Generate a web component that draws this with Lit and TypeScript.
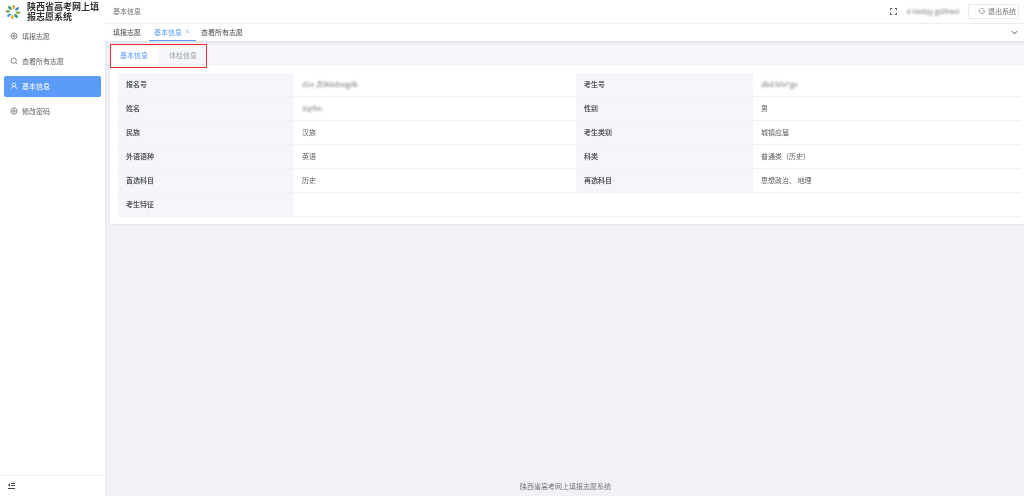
import { LitElement, html, css, svg } from "lit";
import { customElement } from "lit/decorators.js";

const gear = html`<svg class="ic" viewBox="0 0 16 16" fill="none" stroke="currentColor" stroke-width="1.5"><path d="M8 1.500l5.600 3.200v6.600L8 14.500l-5.600-3.200V4.700z"/><circle cx="8" cy="8" r="2.300"/></svg>`;
const search = html`<svg class="ic" viewBox="0 0 16 16" fill="none" stroke="currentColor" stroke-width="1.5"><circle cx="7.300" cy="7.300" r="5.300"/><path d="M11.200 11.200l3 3"/></svg>`;
const user = html`<svg class="ic" viewBox="0 0 16 16" fill="none" stroke="currentColor" stroke-width="1.5"><circle cx="8" cy="5.500" r="3.600"/><path d="M2 14.500c.6-3.400 3-5.400 6-5.400s5.400 2 6 5.400"/></svg>`;

const petals = ["#d9a92c", "#3d8fbf", "#8cb43c", "#2f8f6b", "#d9b13a", "#4f9bc4", "#6cae45", "#2f8f6b"];

@customElement("app-root")
export class AppRoot extends LitElement {
  static styles = css`
    :host { display: flex; width: 1024px; height: 496px; overflow: hidden; position: relative; background: #f0f2f7; color: #5a5c60; font-family: "Noto Sans CJK SC", "Liberation Sans", sans-serif; font-size: 7px; filter: blur(.3px); }
    * { box-sizing: border-box; }
    .side { width: 105px; flex: none; background: #fff; display: flex; flex-direction: column; box-shadow: 1px 0 2px rgba(0,0,0,.04); }
    .brand { display: flex; align-items: flex-start; height: 26px; padding: 2px 0 0 5px; gap: 6px; }
    .brand svg { width: 16px; height: 16px; flex: none; margin-top: 2px; }
    .brand b { font-size: 9px; line-height: 10px; font-weight: 700; color: #303133; white-space: nowrap; }
    .menu { display: flex; flex-direction: column; gap: 4px; padding: 0 4px; flex: 1; }
    .item { height: 21px; display: flex; align-items: center; gap: 4px; padding: 0 0 1px 6px; border-radius: 2px; color: #5a5c60; }
    .item.on { background: #5a9cf8; color: #fff; }
    .ic { width: 8px; height: 8px; flex: none; }
    .fold { height: 21px; border-top: 1px solid #eef1f6; display: flex; align-items: center; padding-left: 8px; }
    .fold svg { width: 8px; height: 8px; }
    .main { flex: 1; min-width: 0; display: flex; flex-direction: column; }
    .top { height: 24px; background: #fff; display: flex; align-items: center; padding: 0 5px 1px 8px; border-bottom: 1px solid #eceef2; color: #707276; }
    .crumb { flex: 1; }
    .full { width: 7px; height: 7px; margin-right: 10px; color: #303133; }
    .acct { filter: blur(1px); color: #707276; margin-right: 6px; width: 55px; white-space: nowrap; overflow: hidden; font-size: 6.500px; }
    .logout { height: 15px; width: 51px; border: 1px solid #e8eaee; border-radius: 1px; display: flex; align-items: center; justify-content: flex-end; padding: 0 2px 1px 0; gap: 3px; color: #707276; }
    .logout svg { width: 6px; height: 6px; }
    .tabs { height: 18px; background: #fff; display: flex; align-items: stretch; padding-left: 3px; border-bottom: 1px solid #dfe2e6; box-shadow: 0 1px 2px rgba(0,0,0,.05); position: relative; }
    .tab { padding: 0 5px 1px; display: flex; align-items: center; gap: 3px; color: #444; white-space: nowrap; }
    .tab.first { margin-right: 3px; }
    .tab.on { color: #5a9cf8; border-bottom: 1.500px solid #5a9cf8; width: 47px; }
    .close { width: 5px; height: 5px; flex: none; }
    .spacer { flex: 1; }
    .chev { width: 7px; height: 7px; align-self: center; margin-right: 6px; color: #333; }
    .content { flex: 1; padding: 3px 0 0 5px; display: flex; flex-direction: column; }
    .card { background: #fff; height: 179px; flex: none; box-shadow: 0 1px 2px rgba(0,0,0,.06); display: flex; flex-direction: column; }
    .ctabs { height: 20px; flex: none; background: #f5f7fa; border-bottom: 1px solid #eef0f4; display: flex; }
    .ctab { width: 50px; display: flex; align-items: center; justify-content: center; color: #a0a4ab; }
    .ctab.on { width: 48px; background: #fff; color: #5a9cf8; height: 20px; }
    .grid { margin: 8px 3px 0 8px; display: grid; grid-template-columns: 176px 282px 177px 268px; grid-auto-rows: 24px; }
    .cell { display: flex; align-items: center; padding: 0 0 1px 8px; border-bottom: 1px solid #f0f2f6; color: #5a5c60; white-space: nowrap; }
    .lab { background: #f4f6fb; font-weight: 700; }
    .blur { filter: blur(1.1px); color: #707276; }
    .foot { flex: 1; display: flex; align-items: flex-end; justify-content: center; padding: 0 3px 5px 0; color: #707276; }
    .mark { position: absolute; left: 110px; top: 44px; width: 97px; height: 24px; border: 1px solid #ee2a2a; pointer-events: none; }
  `;

  private row(a: string, b: unknown, c: string, d: unknown) {
    return html`<div class="cell lab">${a}</div><div class="cell">${b}</div><div class="cell lab">${c}</div><div class="cell">${d}</div>`;
  }

  render() {
    return html`
      <aside class="side">
        <div class="brand">
          <svg viewBox="0 0 20 20">
            ${petals.map((c, i) => svg`<path d="M10.500 7C8.500 5 8.500 2.500 11 .5c2.200 2 2 4.500-.5 6.500z" fill=${c} transform="rotate(${i * 45} 10 10)"/>`)}
          </svg>
          <b>陕西省高考网上填<br />报志愿系统</b>
        </div>
        <nav class="menu">
          <div class="item">${gear}填报志愿</div>
          <div class="item">${search}查看所有志愿</div>
          <div class="item on">${user}基本信息</div>
          <div class="item">${gear}修改密码</div>
        </nav>
        <div class="fold"><svg viewBox="0 0 8 8" fill="#444"><rect x="3" y="1" width="4" height="1"/><rect x="3" y="3" width="4" height="1"/><rect y="6" width="7" height="1"/><path d="M2 1v4L0 3z"/></svg></div>
      </aside>
      <div class="main">
        <header class="top">
          <div class="crumb">基本信息</div>
          <svg class="full" viewBox="0 0 8 8" fill="none" stroke="currentColor"><path d="M.5 2.500v-2h2M5.500.5h2v2M7.500 5.500v2h-2M2.500 7.500h-2v-2"/></svg>
          <div class="acct">6 Vwsbjy gsDhwd</div>
          <div class="logout"><svg viewBox="0 0 8 8" fill="none" stroke="currentColor" stroke-width=".8"><path d="M6.500 1.500A3.500 3.500 0 1 0 7.500 4H4"/></svg>退出系统</div>
        </header>
        <div class="tabs">
          <div class="tab first">填报志愿</div>
          <div class="tab on">基本信息<svg class="close" viewBox="0 0 6 6" stroke="currentColor" stroke-width=".7"><path d="M.8.8l4.400 4.400M5.200.8L.8 5.200"/></svg></div>
          <div class="tab">查看所有志愿</div>
          <div class="spacer"></div>
          <svg class="chev" viewBox="0 0 8 8" fill="none" stroke="currentColor"><path d="M1 2.500l3 3 3-3"/></svg>
        </div>
        <div class="content">
          <section class="card">
            <div class="ctabs"><div class="ctab on">基本信息</div><div class="ctab">体检信息</div></div>
            <div class="grid">
              ${this.row("报名号", html`<span class="blur">d1e ,B3kkdnxgdk</span>`, "考生号", html`<span class="blur">dbd bhi^gx</span>`)}
              ${this.row("姓名", html`<span class="blur">2qrfm.</span>`, "性别", "男")}
              ${this.row("民族", "汉族", "考生类别", "城镇应届")}
              ${this.row("外语语种", "英语", "科类", "普通类（历史）")}
              ${this.row("首选科目", "历史", "再选科目", "思想政治、 地理")}
              <div class="cell lab">考生特征</div><div class="cell"></div><div class="cell"></div><div class="cell"></div>
            </div>
          </section>
          <footer class="foot">陕西省高考网上填报志愿系统</footer>
        </div>
      </div>
      <div class="mark"></div>
    `;
  }
}
